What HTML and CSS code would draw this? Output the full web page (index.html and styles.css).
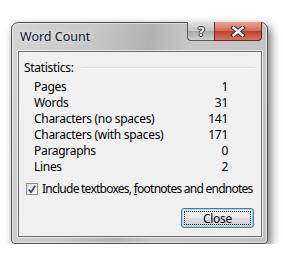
FILE: index.html
```html
<!DOCTYPE html>
<html lang="en">
<head>
  <meta charset="UTF-8">
  <title>Word Count</title>
  <link rel="stylesheet" href="styles.css">
</head>
<body>
  <div class="window">
    <div class="titlebar">
      <span class="title">Word Count</span>
      <div class="caption-buttons">
        <span class="cap-btn help">?</span>
        <span class="cap-btn close">
          <svg width="16" height="11" viewBox="0 0 16 11">
            <path d="M3.5 1.8 L12.5 9.2 M12.5 1.8 L3.5 9.2" stroke="#4a1a1a" stroke-width="4.4" stroke-linecap="square"/>
            <path d="M3.5 1.8 L12.5 9.2 M12.5 1.8 L3.5 9.2" stroke="#fff" stroke-width="2.4" stroke-linecap="square"/>
          </svg>
        </span>
      </div>
    </div>
    <div class="client">
      <div class="group-head">
        <span>Statistics:</span>
        <span class="rule"></span>
      </div>
      <div class="stats">
        <div class="row"><span>Pages</span><span>1</span></div>
        <div class="row"><span>Words</span><span>31</span></div>
        <div class="row"><span>Characters (no spaces)</span><span>141</span></div>
        <div class="row"><span>Characters (with spaces)</span><span>171</span></div>
        <div class="row"><span>Paragraphs</span><span>0</span></div>
        <div class="row"><span>Lines</span><span>2</span></div>
      </div>
      <label class="check">
        <span class="box">
          <svg width="11" height="11" viewBox="0 0 11 11">
            <path d="M2 5.5 L4.5 8.5 L9 1.5" fill="none" stroke="#3b4e8c" stroke-width="2"/>
          </svg>
        </span>
        <span class="check-text">Include textboxes, <u>f</u>ootnotes and endnotes</span>
      </label>
      <div class="actions">
        <button class="btn"><span class="focus">Close</span></button>
      </div>
    </div>
  </div>
</body>
</html>
```

FILE: styles.css
```css
* { box-sizing: border-box; }
body { margin: 0; background: #fff; font-family: "Noto Sans", "Open Sans", sans-serif; font-size: 12px; letter-spacing: -0.3px; color: #000; }
.window { margin: 22px 0 0 11px; width: 257px; height: 222px; border: 1px solid #4e4e4e; border-radius: 7px 7px 4px 4px;
  background: linear-gradient(100deg, #d4d4d4 0%, #c6c6c6 30%, #b2b2b2 48%, #c8c8c8 62%, #c2c2c2 100%);
  box-shadow: 3px 4px 10px rgba(0,0,0,0.55), inset 0 0 0 1px rgba(255,255,255,0.55);
  display: flex; flex-direction: column; padding: 0 5px 6px 6px; }
.titlebar { height: 28px; flex: none; display: flex; justify-content: space-between; align-items: flex-start; }
.title { padding: 5px 0 0 2px; font-size: 12.5px; letter-spacing: 0; color: #0c1b33; text-shadow: 0 0 6px rgba(255,255,255,0.9); }
.caption-buttons { display: flex; margin-top: -1px; }
.cap-btn { height: 19px; display: flex; align-items: center; justify-content: center; border: 1px solid #5a5a5a; border-top: none; }
.help { width: 27px; border-radius: 0 0 0 4px; border-right: none; font-family: "DejaVu Sans", sans-serif; font-weight: bold; font-size: 13px; color: #e8e8e8;
  background: linear-gradient(#e2e2e2, #c4c4c4 50%, #aaaaaa 52%, #cfcfcf);
  text-shadow: 1px 0 0 #3a3a3a, -1px 0 0 #3a3a3a, 0 1px 0 #3a3a3a, 0 -1px 0 #3a3a3a; }
.close { width: 48px; border-radius: 0 0 4px 0; border-color: #6a2a22;
  background: linear-gradient(#e8a493, #d26c58 48%, #c0402c 52%, #d8735c); }
.client { flex: 1; background: #f0f0f0; border: 1px solid #6f6f6f; box-shadow: 0 0 0 1px rgba(255,255,255,0.6);
  padding: 8px 0 0 5px; display: flex; flex-direction: column; }
.group-head { display: flex; align-items: center; gap: 7px; line-height: 16px; padding-right: 6px; }
.rule { flex: 1; height: 2px; border-top: 1px solid #d5dfe5; border-bottom: 1px solid #fff; }
.stats { margin: 3px 0 0 10px; width: 194px; }
.row { display: flex; justify-content: space-between; line-height: 16px; }
.check { display: flex; align-items: center; gap: 4px; margin: 6px 0 0 2px; line-height: 16px; white-space: nowrap; }
.check-text { letter-spacing: -0.75px; }
.box { width: 12px; height: 12px; border: 1px solid #8e8f8f; background: linear-gradient(135deg, #dcdcdc, #fff);
  display: flex; align-items: center; justify-content: center; }
.actions { display: flex; justify-content: flex-end; padding: 11px 7px 0 0; }
.btn { width: 73px; height: 20px; font: inherit; letter-spacing: inherit; padding: 2px; border: 1px solid #3c7fb1; border-radius: 3px;
  background: linear-gradient(#f2f2f2, #ebebeb 50%, #dddddd 51%, #cfcfcf);
  box-shadow: 0 0 0 1px #9fd8f5 inset; color: #000; }
.focus { display: flex; align-items: center; justify-content: center; height: 100%; border: 1px dotted #000; }
```
